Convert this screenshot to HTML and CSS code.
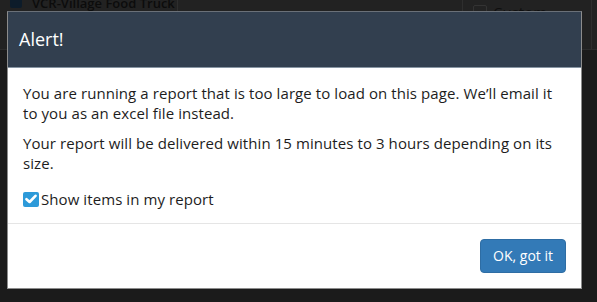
FILE: index.html
```html
<!DOCTYPE html>
<html lang="en">
<head>
    <meta charset="UTF-8">
    <title>Alert</title>
    <link rel="stylesheet" href="styles.css">
</head>
<body>
    <!-- page behind the dimmed backdrop -->
    <div class="page">
        <div class="page-row">
            <div class="cell cell-name">
                <span class="page-check"></span>
                <span class="page-name">VCR-Village Food Truck</span>
            </div>
            <div class="cell cell-mid"></div>
            <div class="cell cell-type">
                <span class="page-box"></span>
                <span class="page-type">Custom</span>
            </div>
        </div>
    </div>

    <div class="backdrop">
        <div class="modal">
            <div class="modal-header">
                <h4 class="modal-title">Alert!</h4>
            </div>
            <div class="modal-body">
                <p>You are running a report that is too large to load on this page. We’ll email it to you as an excel file instead.</p>
                <p>Your report will be delivered within 15 minutes to 3 hours depending on its size.</p>
                <label class="check">
                    <span class="check-box">
                        <svg width="12" height="10" viewBox="0 0 12 10"><path d="M1.5 5.2 L4.6 8 L10.5 1.8" fill="none" stroke="#fff" stroke-width="2.6" stroke-linecap="round" stroke-linejoin="round"/></svg>
                    </span>
                    Show items in my report
                </label>
            </div>
            <div class="modal-footer">
                <button class="btn-primary">OK, got it</button>
            </div>
        </div>
    </div>
</body>
</html>
```

FILE: styles.css
```css
body {
    margin: 0;
    background: #1b1b1b;
    font-family: 'Open Sans', sans-serif;
    font-size: 15px;
    line-height: 20px;
    color: #1d1d1d;
    overflow: hidden;
}

.page-row {
    display: flex;
    height: 49px;
    background: #222;
    border-bottom: 1px solid #2c2c2c;
}

.cell {
    border-right: 1px solid #2e2e2e;
    display: flex;
    align-items: flex-start;
    white-space: nowrap;
    overflow: hidden;
}

.cell-name {
    width: 167px;
    padding-left: 10px;
    gap: 10px;
}

.cell-mid {
    width: 284px;
}

.cell-type {
    width: 118px;
    padding-left: 10px;
    gap: 6px;
}

.page-check {
    flex-shrink: 0;
    width: 12px;
    height: 12px;
    margin-top: -4px;
    border-radius: 2px;
    background: #0d1c2a;
}

.page-name {
    margin-top: -7px;
    font-size: 13px;
    font-weight: 600;
    color: #0c0c0c;
}

.page-box {
    flex-shrink: 0;
    width: 12px;
    height: 12px;
    margin-top: 5px;
    border: 1px solid #333;
    border-radius: 2px;
}

.page-type {
    margin-top: 2px;
    color: #0e0e0e;
}

.backdrop {
    position: fixed;
    inset: 0;
    padding: 11px 0 0 7px;
}

.modal {
    width: 573px;
    background: #fff;
    border: 1px solid #8c8c8c;
    border-top-color: #6a7078;
}

.modal-header {
    background: #323f4f;
    padding: 15px 11px;
    border-bottom: 1px solid #8795a3;
}

.modal-title {
    margin: 0;
    font-size: 18px;
    line-height: 25px;
    font-weight: 400;
    color: #fff;
}

.modal-body {
    padding: 15px 17px 14px 15px;
    letter-spacing: 0.08px;
}

.modal-body p {
    margin: 0 0 10px;
}

.check {
    display: flex;
    align-items: center;
    gap: 2px;
    margin-top: 16px;
}

.check-box {
    width: 16px;
    height: 15px;
    border-radius: 2px;
    background: #2d9ad9;
    display: flex;
    align-items: center;
    justify-content: center;
}

.modal-footer {
    display: flex;
    justify-content: flex-end;
    padding: 15px;
    border-top: 1px solid #e5e5e5;
}

.btn-primary {
    font-family: 'Open Sans', sans-serif;
    font-size: 14px;
    line-height: 20px;
    padding: 6px 12px;
    color: #fff;
    background: #337ab7;
    border: 1px solid #2e6da4;
    border-radius: 4px;
}
```
